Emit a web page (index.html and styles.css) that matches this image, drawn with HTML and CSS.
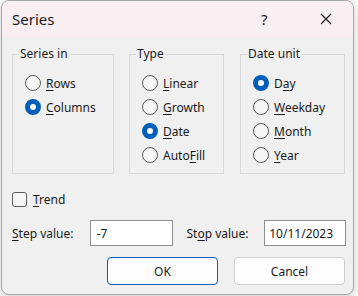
FILE: index.html
```html
<!DOCTYPE html>
<html lang="en">
<head>
    <meta charset="UTF-8">
    <title>Series</title>
    <link rel="stylesheet" href="styles.css">
</head>
<body>
    <div class="dialog">
        <header class="titlebar">
            <span class="title">Series</span>
            <span class="help">?</span>
            <span class="close">
                <svg width="12" height="12" viewBox="0 0 12 12">
                    <path d="M1 1L11 11M11 1L1 11" stroke="#1a1a1a" stroke-width="1.1" fill="none"/>
                </svg>
            </span>
        </header>

        <div class="content">
            <div class="groups">
                <fieldset class="group group-series">
                    <legend>Series in</legend>
                    <div class="option"><span class="radio"></span><span><u>R</u>ows</span></div>
                    <div class="option"><span class="radio checked"></span><span><u>C</u>olumns</span></div>
                </fieldset>
                <fieldset class="group group-type">
                    <legend>Type</legend>
                    <div class="option"><span class="radio"></span><span><u>L</u>inear</span></div>
                    <div class="option"><span class="radio"></span><span><u>G</u>rowth</span></div>
                    <div class="option"><span class="radio checked"></span><span><u>D</u>ate</span></div>
                    <div class="option"><span class="radio"></span><span>Auto<u>F</u>ill</span></div>
                </fieldset>
                <fieldset class="group group-unit">
                    <legend>Date unit</legend>
                    <div class="option"><span class="radio checked"></span><span>D<u>a</u>y</span></div>
                    <div class="option"><span class="radio"></span><span><u>W</u>eekday</span></div>
                    <div class="option"><span class="radio"></span><span><u>M</u>onth</span></div>
                    <div class="option"><span class="radio"></span><span><u>Y</u>ear</span></div>
                </fieldset>
            </div>

            <div class="trend">
                <span class="checkbox"></span>
                <span><u>T</u>rend</span>
            </div>

            <div class="values">
                <span class="label-step"><u>S</u>tep value:</span>
                <span class="field field-step">-7</span>
                <span class="label-stop">St<u>o</u>p value:</span>
                <span class="field field-stop">10/11/2023</span>
            </div>

            <div class="buttons">
                <button class="btn btn-default">OK</button>
                <button class="btn">Cancel</button>
            </div>
        </div>
    </div>
</body>
</html>
```

FILE: styles.css
```css
* {
    margin: 0;
    padding: 0;
    box-sizing: border-box;
}

body {
    font-family: 'Noto Sans', 'Open Sans', sans-serif;
    font-size: 12px;
    color: #1a1a1a;
    background: #f7f7f7;
    width: 358px;
    height: 296px;
    overflow: hidden;
}

.dialog {
    margin-left: 1px;
    width: 353px;
    height: 295px;
    background: #f0f0f0;
    border: 1px solid #a8a8a8;
    border-radius: 8px;
    overflow: hidden;
    box-shadow: 0 2px 6px rgba(0, 0, 0, 0.15);
}

.titlebar {
    height: 36px;
    background: #f9eef2;
    display: flex;
    align-items: center;
    padding-left: 10px;
}

.title {
    font-size: 15px;
    flex: 1;
}

.help {
    font-size: 15px;
    width: 10px;
    margin-right: 49px;
}

.close {
    display: flex;
    margin-right: 21px;
}

.content {
    padding: 9px 7px 0 10px;
}

.groups {
    display: flex;
}

.group {
    border: 1px solid #d9d9d9;
    padding: 9px 0 6px 0;
}

.group legend {
    line-height: 16px;
    padding: 0 1px;
    margin-left: 6px;
}

.group-series {
    width: 102px;
}

.group-type {
    width: 95px;
    margin-left: 15px;
}

.group-unit {
    width: 105px;
    margin-left: 16px;
}

.option {
    height: 24px;
    padding-left: 12px;
    display: flex;
    align-items: center;
    gap: 5px;
    white-space: nowrap;
}

.radio {
    width: 16px;
    height: 16px;
    border-radius: 50%;
    border: 1px solid #5c5c5c;
    background: #f6f6f6;
    flex-shrink: 0;
}

.radio.checked {
    border: 5px solid #005fb8;
    background: #fff;
}

u {
    text-decoration-thickness: 1px;
    text-underline-offset: 2px;
}

.trend {
    margin-top: 18px;
    height: 14px;
    display: flex;
    align-items: center;
    gap: 6px;
}

.checkbox {
    width: 15px;
    height: 15px;
    border: 1px solid #5c5c5c;
    border-radius: 3px;
    background: #f6f6f6;
}

.values {
    margin-top: 14px;
    display: flex;
    align-items: center;
}

.field {
    height: 26px;
    background: #fff;
    border: 1px solid #8e8e8e;
    display: flex;
    align-items: center;
}

.label-step {
    width: 78px;
}

.field-step {
    width: 83px;
    padding-left: 6px;
}

.label-stop {
    margin-left: 14px;
    width: 78px;
}

.field-stop {
    width: 82px;
    padding-left: 4px;
}

.buttons {
    margin-top: 11px;
    display: flex;
    justify-content: flex-end;
    gap: 16px;
    padding-right: 1px;
}

.btn {
    width: 111px;
    height: 28px;
    font: inherit;
    color: #1a1a1a;
    background: #fdfdfd;
    border: 1px solid #d0d0d0;
    border-radius: 4px;
}

.btn-default {
    border-color: #005fb8;
}
```
